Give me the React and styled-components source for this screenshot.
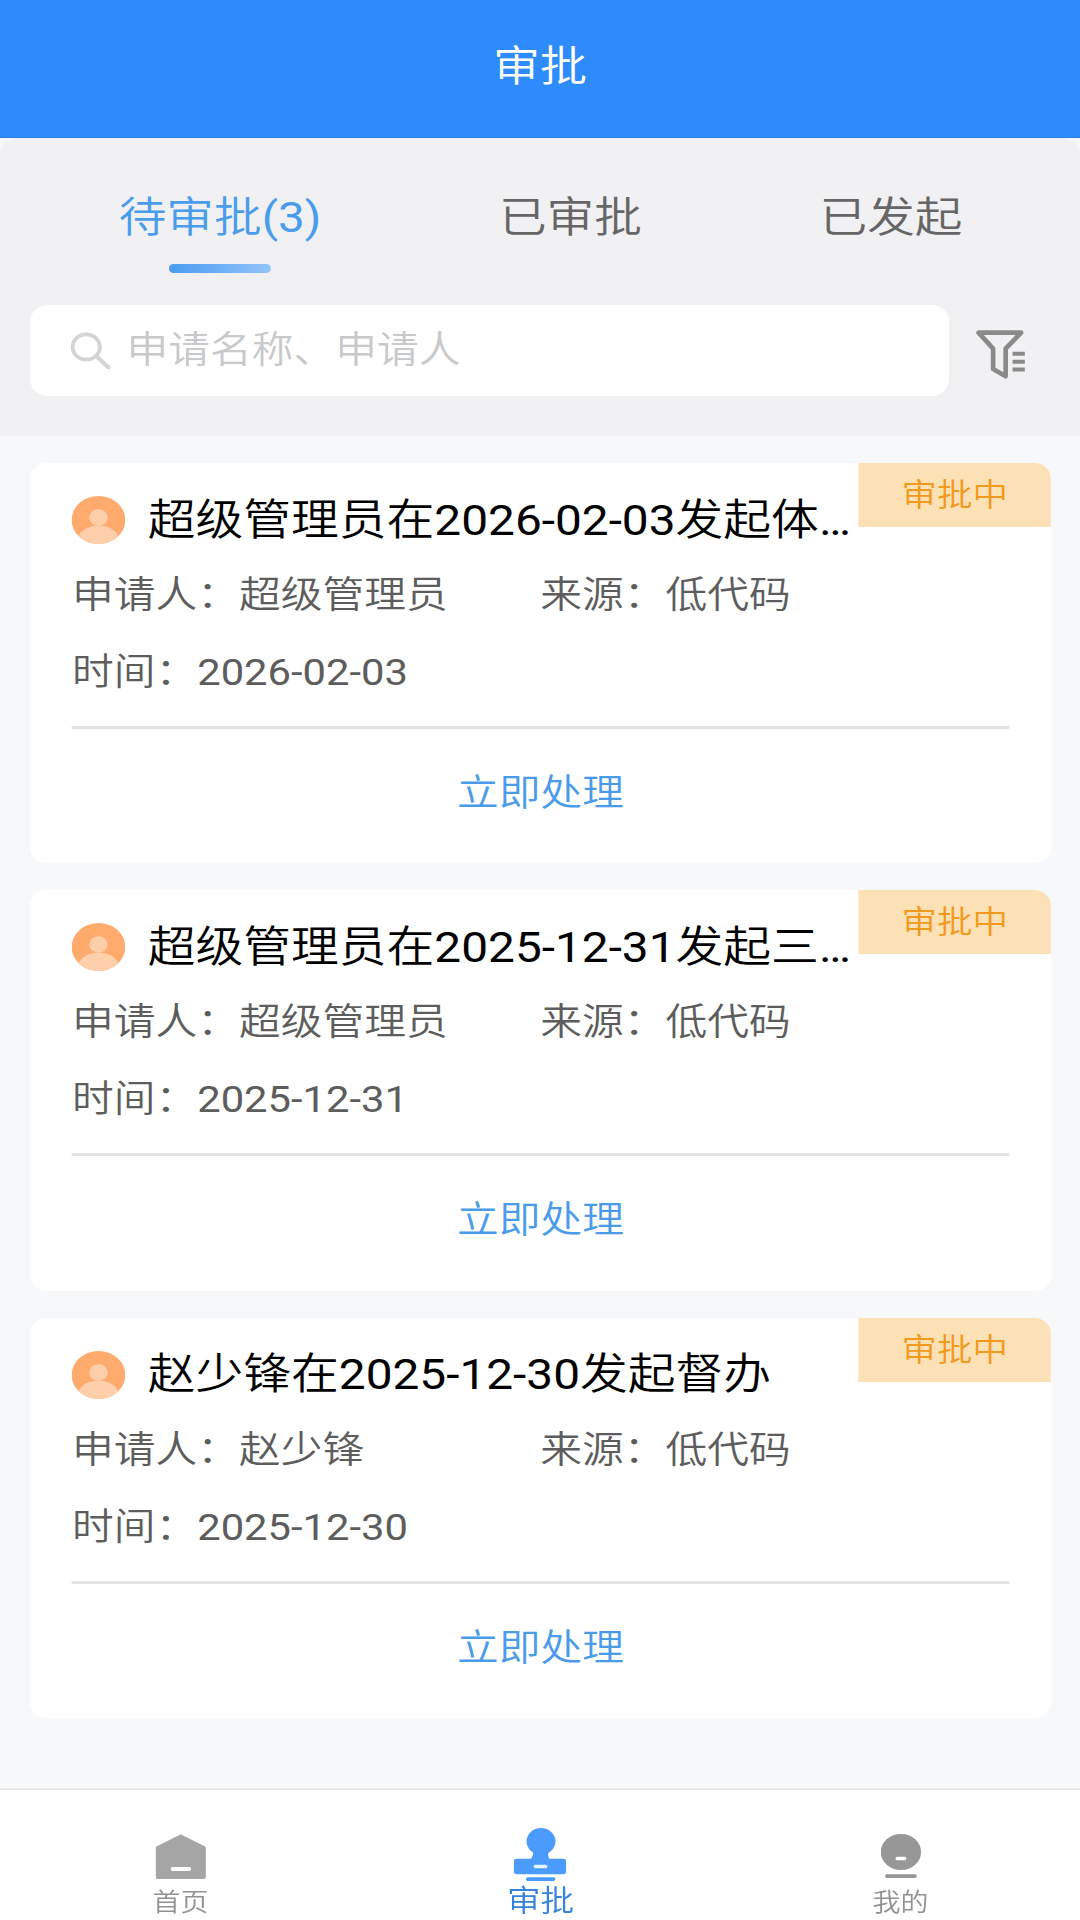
import React from 'react'
import styled, { createGlobalStyle } from 'styled-components';

const approvals = [
  { id: 1, title: '超级管理员在2026-02-03发起体…', applicant: '超级管理员', source: '低代码', time: '2026-02-03' },
  { id: 2, title: '超级管理员在2025-12-31发起三…', applicant: '超级管理员', source: '低代码', time: '2025-12-31' },
  { id: 3, title: '赵少锋在2025-12-30发起督办', applicant: '赵少锋', source: '低代码', time: '2025-12-30' },
]

const GlobalStyle = createGlobalStyle`
  * {
    box-sizing: border-box;
  }
  html, body {
    margin: 0;
    width: 1080px;
    height: 1920px;
    overflow: hidden;
    background: #f6f8fb;
  }
`;

// the app is laid out 965 wide and widened to fill the screen
const Screen = styled.div`
  width: 965px;
  height: 1920px;
  transform: scaleX(1.11917);
  transform-origin: 0 0;
  display: flex;
  flex-direction: column;
  background: #f6f8fa;
  font-family: Roboto, "Noto Sans CJK SC DemiLight", "Noto Sans CJK SC", sans-serif;
  font-weight: 400;
  white-space: nowrap;
`;

const Header = styled.header`
  height: 138px;
  flex: none;
  padding-top: 34px;
  background: #2e8bfc;
  border-bottom: 1px solid #2b7fe2;
  color: #fff;
  font-size: 42px;
  line-height: 66px;
  text-align: center;
`;

const Panel = styled.section`
  height: 298px;
  flex: none;
  background: #f1f1f3;
  border-radius: 16px 16px 0 0;
`;

const Tabs = styled.nav`
  height: 167px;
  padding: 46px 105px 0 106px;
  display: flex;
  justify-content: space-between;
`;

const Tab = styled.div`
  display: flex;
  flex-direction: column;
  align-items: center;
  color: ${p => p.$active ? '#4a9cec' : '#666'};
  font-size: 42.6px;
  line-height: 66px;
`;

const TabLine = styled.div`
  width: 91px;
  height: 9px;
  margin-top: 14px;
  border-radius: 4px;
  background: linear-gradient(90deg, #4b9bf0, #93c3fb);
`;

const SearchRow = styled.div`
  display: flex;
  align-items: center;
  padding-left: 27px;
`;

const SearchBox = styled.div`
  width: 821px;
  height: 91px;
  padding-left: 35.5px;
  display: flex;
  align-items: center;
  background: #fff;
  border-radius: 16px;
`;

const Placeholder = styled.span`
  margin-left: 14.5px;
  color: #c8c9cb;
  font-size: 37.3px;
  line-height: 60px;
  padding-bottom: 1px;
`;

const FilterButton = styled.div`
  margin: 8px 0 0 23.5px;
  display: flex;
`;

const List = styled.main`
  flex: 1;
  display: flex;
  flex-direction: column;
  gap: 27px;
  padding: 27px 26px 0 27px;
`;

const Card = styled.article`
  height: 400.4px;
  background: #fff;
  border-radius: 15px;
  overflow: hidden;
`;

const CardTop = styled.div`
  display: flex;
  height: 91px;
  padding-left: 37.3px;
`;

const CardName = styled.div`
  flex: 1;
  min-width: 0;
  padding-top: 23px;
  display: flex;
  align-items: center;
`;

const CardTitle = styled.div`
  margin-left: 19.7px;
  padding-bottom: 1px;
  color: #000;
  font-size: 42.7px;
  line-height: 62px;
`;

const Status = styled.div`
  width: 172px;
  height: 64px;
  background: #fde1b6;
  color: #f29a1c;
  font-size: 31.7px;
  line-height: 66px;
  text-align: center;
`;

const Meta = styled.div`
  margin: 0 37px 0 37.3px;
  height: 175px;
  padding-top: 3px;
  border-bottom: 3px solid #e3e4e5;
  display: grid;
  grid-template-columns: 418.5px 1fr;
  grid-template-rows: 77px 77px;
  line-height: 77px;
  color: #5d5d5d;
  font-size: 37.3px;
`;

const Action = styled.div`
  height: 130px;
  line-height: 129px;
  text-align: center;
  color: #4a9bea;
  font-size: 37.3px;
`;

const TabBar = styled.footer`
  height: 132px;
  flex: none;
  display: grid;
  grid-template-columns: repeat(3, 1fr);
  background: #fff;
  border-top: 2px solid #e8e8e8;
`;

const BarItem = styled.div`
  padding-top: ${p => p.$active ? 38 : 44}px;
  padding-left: 1px;
  display: flex;
  flex-direction: column;
  align-items: center;
  color: ${p => p.$active ? '#3583da' : '#929292'};
  font-size: ${p => p.$active ? 30 : 25}px;
  line-height: 36px;
`;

const BarLabel = styled.span`
  margin-top: ${p => p.$gap}px;
`;

const SearchIcon = () => (
  <svg width="36" height="38" viewBox="0 0 118 112" preserveAspectRatio="none" fill="none" stroke="#d3d4d5" strokeLinecap="round">
    <ellipse cx="46" cy="44" rx="40" ry="37" strokeWidth="11" />
    <path d="M77 73L111 104" strokeWidth="12" />
  </svg>
)

const FilterIcon = () => (
  <svg width="44" height="49" viewBox="0 0 149 147" preserveAspectRatio="none" fill="none" stroke="#8a8a8a" strokeWidth="14" strokeLinejoin="round">
    <path d="M8 8H137L90 56V139L52 117V56Z" />
    <path d="M111 71H148M111 95H148M111 118.500H148" strokeWidth="12" />
  </svg>
)

const Avatar = () => (
  <svg width="48" height="48" viewBox="0 0 48 48">
    <clipPath id="face"><circle cx="24" cy="24" r="24" /></clipPath>
    <g clipPath="url(#face)">
      <rect width="48" height="48" fill="#ffab6d" />
      <circle cx="24" cy="21.500" r="8.300" fill="#ffcfac" />
      <ellipse cx="24" cy="46" rx="19" ry="16.500" fill="#ffcfac" />
    </g>
  </svg>
)

const HomeIcon = () => (
  <svg width="45" height="45" viewBox="0 0 150 135" preserveAspectRatio="none">
    <path d="M71 3Q75 0 79 3L146 37Q150 40 150 44V128Q150 135 143 135H7Q0 135 0 128V44Q0 40 4 37Z" fill="#a5a5a5" />
    <rect x="45" y="99" width="61" height="12" rx="6" fill="#fff" />
  </svg>
)

const StampIcon = () => (
  <svg width="47" height="53" viewBox="0 0 158 159" preserveAspectRatio="none" fill="#4a9bfb">
    <ellipse cx="82" cy="40" rx="43.500" ry="40" />
    <path d="M59 60H104V70Q102 80 106 93H52Q60 80 59 70Z" />
    <rect y="92" width="158" height="47" rx="10" />
    <rect x="37" y="148" width="88" height="11" rx="5" />
    <rect x="60" y="110" width="41" height="11" rx="5" fill="#e6f5ff" />
  </svg>
)

const MineIcon = () => (
  <svg width="36" height="44" viewBox="0 0 120 132" preserveAspectRatio="none" fill="#979797">
    <ellipse cx="60" cy="54" rx="60" ry="54" />
    <rect x="13" y="121" width="94" height="11" rx="5" />
    <rect x="44" y="68" width="32" height="11" rx="5" fill="#fff" />
  </svg>
)

const ApprovalCard = ({ title, applicant, source, time }) => (
  <Card>
    <CardTop>
      <CardName>
        <Avatar />
        <CardTitle>{title}</CardTitle>
      </CardName>
      <Status>审批中</Status>
    </CardTop>
    <Meta>
      <span>申请人：{applicant}</span>
      <span>来源：{source}</span>
      <span>时间：{time}</span>
    </Meta>
    <Action>立即处理</Action>
  </Card>
)

const App = () => (
  <>
    <GlobalStyle />
    <Screen>
      <Header>审批</Header>
      <Panel>
        <Tabs>
          <Tab $active>待审批(3)<TabLine /></Tab>
          <Tab>已审批</Tab>
          <Tab>已发起</Tab>
        </Tabs>
        <SearchRow>
          <SearchBox>
            <SearchIcon />
            <Placeholder>申请名称、申请人</Placeholder>
          </SearchBox>
          <FilterButton><FilterIcon /></FilterButton>
        </SearchRow>
      </Panel>
      <List>
        {approvals.map(item => <ApprovalCard key={item.id} {...item} />)}
      </List>
      <TabBar>
        <BarItem><HomeIcon /><BarLabel $gap={6}>首页</BarLabel></BarItem>
        <BarItem $active><StampIcon /><BarLabel $gap={2}>审批</BarLabel></BarItem>
        <BarItem><MineIcon /><BarLabel $gap={7}>我的</BarLabel></BarItem>
      </TabBar>
    </Screen>
  </>
)

export default App
